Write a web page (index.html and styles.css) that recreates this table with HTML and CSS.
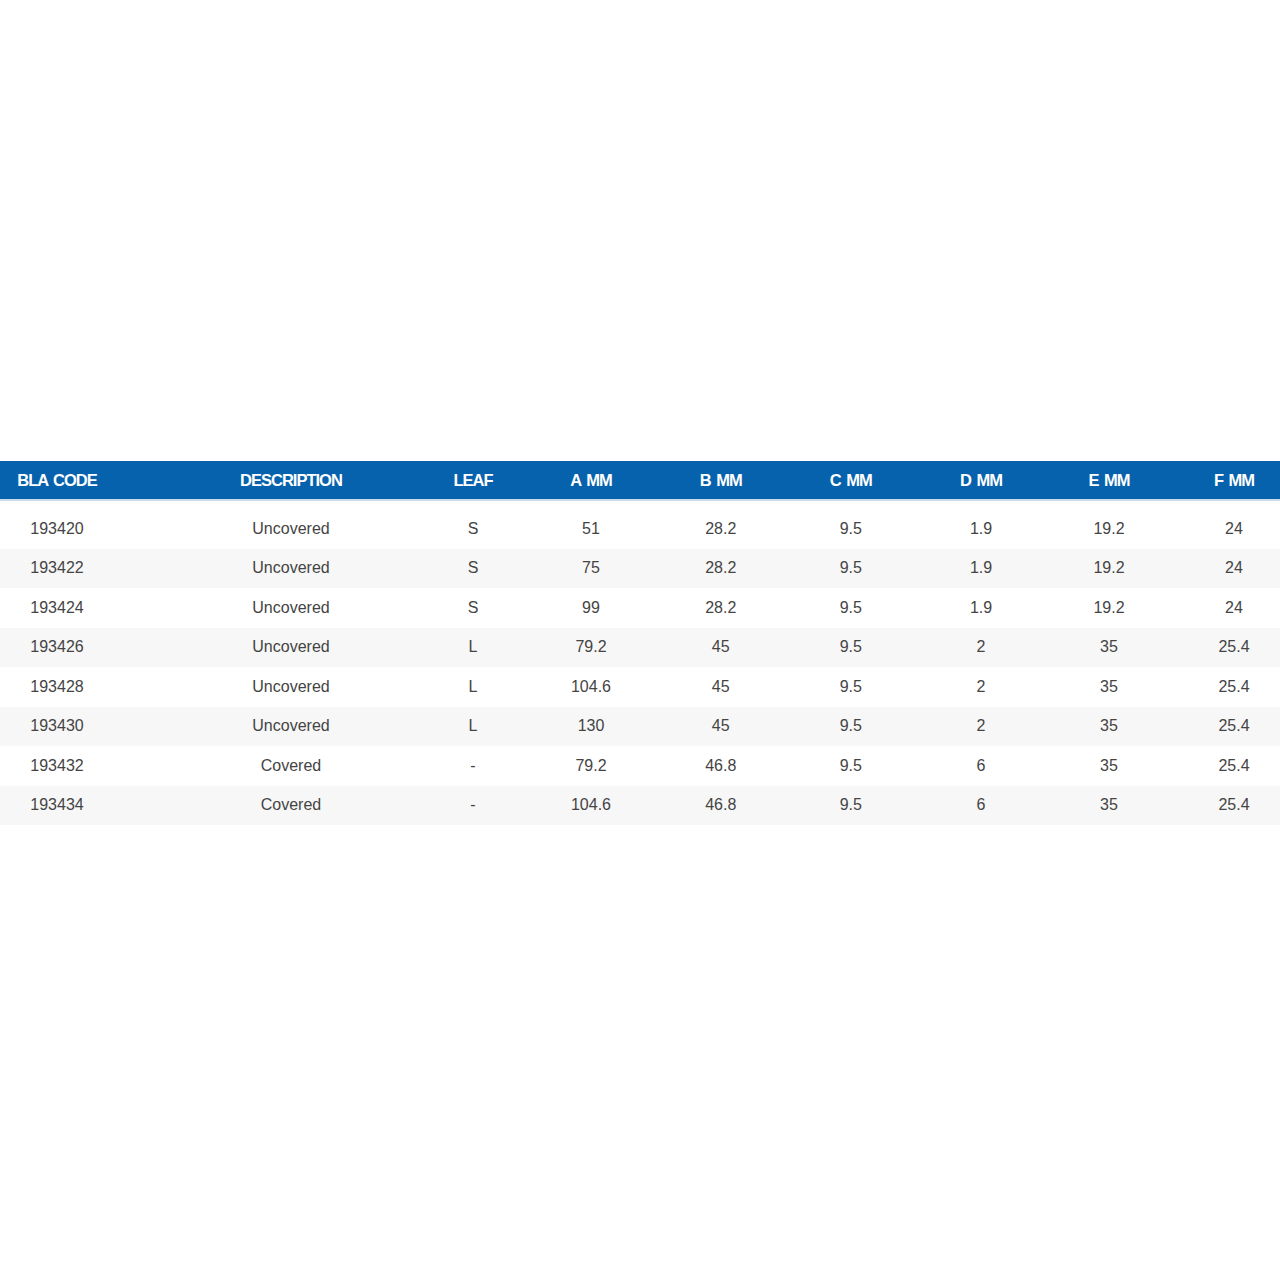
FILE: index.html
```html
<!DOCTYPE html>
<html>
<head>
<meta charset="utf-8">
<link rel="stylesheet" href="styles.css">
</head>
<body>
<div class="page">
  <div class="table">
    <div class="row head">
      <div>BLA CODE</div><div>DESCRIPTION</div><div>LEAF</div><div>A MM</div><div>B MM</div><div>C MM</div><div>D MM</div><div>E MM</div><div>F MM</div>
    </div>
    <div class="body">
      <div class="row"><div>193420</div><div>Uncovered</div><div>S</div><div>51</div><div>28.2</div><div>9.5</div><div>1.9</div><div>19.2</div><div>24</div></div>
      <div class="row alt"><div>193422</div><div>Uncovered</div><div>S</div><div>75</div><div>28.2</div><div>9.5</div><div>1.9</div><div>19.2</div><div>24</div></div>
      <div class="row"><div>193424</div><div>Uncovered</div><div>S</div><div>99</div><div>28.2</div><div>9.5</div><div>1.9</div><div>19.2</div><div>24</div></div>
      <div class="row alt"><div>193426</div><div>Uncovered</div><div>L</div><div>79.2</div><div>45</div><div>9.5</div><div>2</div><div>35</div><div>25.4</div></div>
      <div class="row"><div>193428</div><div>Uncovered</div><div>L</div><div>104.6</div><div>45</div><div>9.5</div><div>2</div><div>35</div><div>25.4</div></div>
      <div class="row alt"><div>193430</div><div>Uncovered</div><div>L</div><div>130</div><div>45</div><div>9.5</div><div>2</div><div>35</div><div>25.4</div></div>
      <div class="row"><div>193432</div><div>Covered</div><div>-</div><div>79.2</div><div>46.8</div><div>9.5</div><div>6</div><div>35</div><div>25.4</div></div>
      <div class="row alt"><div>193434</div><div>Covered</div><div>-</div><div>104.6</div><div>46.8</div><div>9.5</div><div>6</div><div>35</div><div>25.4</div></div>
    </div>
  </div>
</div>
</body>
</html>
```

FILE: styles.css
```css
html, body {
  margin: 0;
  padding: 0;
  background: #ffffff;
}
.page {
  width: 1280px;
  height: 1280px;
  padding-top: 461px;
  box-sizing: border-box;
  font-family: "Liberation Sans", Arial, sans-serif;
}
.row {
  display: grid;
  grid-template-columns: 174px 208px 150px 124px 129.5px 130.5px 130px 126px 108px;
  height: 39.5px;
  align-items: center;
  text-align: center;
  font-size: 16px;
  color: #444444;
}
.row > div {
  white-space: nowrap;
}
.row > :nth-child(1) { padding-right: 60px; }
.row > :nth-child(2) { padding-left: 26px; }
.row > :nth-child(3) { padding-left: 32px; }
.row > :nth-child(4) { padding-right: 6px; }
.row > :nth-child(9) { padding-left: 16px; }
.head {
  height: 38px;
  background: #0662ad;
  border-bottom: 2px solid #c9daec;
  color: #ffffff;
  font-weight: bold;
  font-size: 16.5px;
  letter-spacing: -1px;
  word-spacing: 2px;
  box-sizing: content-box;
}
.body {
  padding-top: 8px;
}
.alt {
  background: #f7f7f7;
}
```
